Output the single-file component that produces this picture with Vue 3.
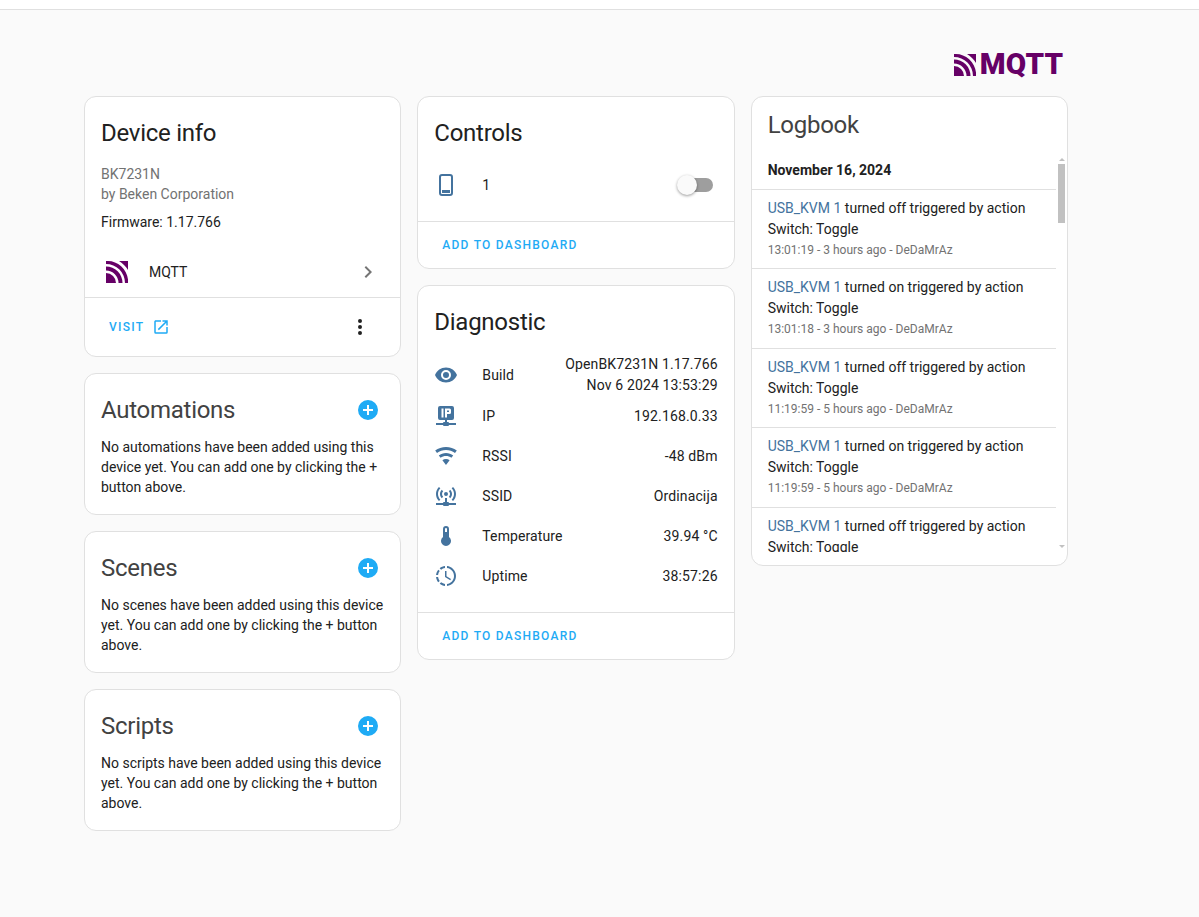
<script setup>
const icons = {
  eye: 'M12,9A3,3 0 0,0 9,12A3,3 0 0,0 12,15A3,3 0 0,0 15,12A3,3 0 0,0 12,9M12,17A5,5 0 0,1 7,12A5,5 0 0,1 12,7A5,5 0 0,1 17,12A5,5 0 0,1 12,17M12,4.5C7,4.5 2.73,7.61 1,12C2.73,16.39 7,19.5 12,19.5C17,19.5 21.27,16.39 23,12C21.27,7.61 17,4.5 12,4.5Z',
  ip: 'M6 2H18A2 2 0 0 1 20 4V14A2 2 0 0 1 18 16H13V18H14A1 1 0 0 1 15 19H22V21H15A1 1 0 0 1 14 22H10A1 1 0 0 1 9 21H2V19H9A1 1 0 0 1 10 18H11V16H6A2 2 0 0 1 4 14V4A2 2 0 0 1 6 2ZM7.5 4.5V13.5H9.5V4.5ZM11 4.5V13.5H13V10H15.5A1.5 1.5 0 0 0 17 8.500V6A1.500 1.500 0 0 0 15.500 4.500ZM13 6.500H15V8H13Z',
  wifi: 'M12,21L15.6,16.2C14.6,15.45 13.35,15 12,15C10.65,15 9.4,15.45 8.4,16.2L12,21M12,3C7.95,3 4.21,4.34 1.2,6.6L3,9C5.5,7.12 8.62,6 12,6C15.38,6 18.5,7.12 21,9L22.8,6.6C19.79,4.34 16.05,3 12,3M12,9C9.3,9 6.81,9.89 4.8,11.4L6.6,13.8C8.1,12.67 9.97,12 12,12C14.03,12 15.9,12.67 17.4,13.8L19.2,11.4C17.19,9.89 14.7,9 12,9Z',
  ap: 'M4.93,2.93C3.12,4.74 2,7.24 2,10C2,12.76 3.12,15.26 4.93,17.07L6.34,15.66C4.89,14.22 4,12.22 4,10C4,7.79 4.89,5.78 6.34,4.34L4.93,2.93M19.07,2.93L17.66,4.34C19.11,5.78 20,7.79 20,10C20,12.22 19.11,14.22 17.66,15.66L19.07,17.07C20.88,15.26 22,12.76 22,10C22,7.24 20.88,4.74 19.07,2.93M7.76,5.76C6.67,6.85 6,8.35 6,10C6,11.65 6.67,13.15 7.76,14.24L9.17,12.83C8.45,12.11 8,11.11 8,10C8,8.89 8.45,7.89 9.17,7.17L7.76,5.76M16.24,5.76L14.83,7.17C15.55,7.89 16,8.89 16,10C16,11.11 15.55,12.11 14.83,12.83L16.24,14.24C17.33,13.15 18,11.65 18,10C18,8.35 17.33,6.85 16.24,5.76M12,8A2,2 0 0,0 10,10A2,2 0 0,0 12,12A2,2 0 0,0 14,10A2,2 0 0,0 12,8M11,14V18H10A1,1 0 0,0 9,19H2V21H9A1,1 0 0,0 10,22H14A1,1 0 0,0 15,21H22V19H15A1,1 0 0,0 14,18H13V14H11Z',
  therm: 'M15 13V5A3 3 0 0 0 9 5V13A5 5 0 1 0 15 13M12 4A1 1 0 0 1 13 5V8H11V5A1 1 0 0 1 12 4Z',
  clock: 'M13,2.03V2.05L13,4.05C17.39,4.59 20.5,8.58 19.96,12.97C19.5,16.61 16.64,19.5 13,19.93V21.93C18.5,21.38 22.5,16.5 21.95,11C21.5,6.25 17.73,2.5 13,2.03M11,2.06C9.05,2.25 7.19,3 5.67,4.26L7.1,5.74C8.22,4.84 9.57,4.26 11,4.06V2.06M4.26,5.67C3,7.19 2.25,9.04 2.05,11H4.05C4.24,9.58 4.8,8.23 5.69,7.1L4.26,5.67M2.06,13C2.26,14.96 3.03,16.81 4.27,18.33L5.69,16.9C4.81,15.77 4.24,14.42 4.06,13H2.06M7.1,18.37L5.67,19.74C7.18,21 9.04,21.79 11,22V20C9.58,19.82 8.23,19.25 7.1,18.37M12.5,7V12.25L17,14.92L16.25,16.15L11,13V7H12.5Z',
  plus: 'M17,13H13V17H11V13H7V11H11V7H13V11H17M12,2A10,10 0 0,0 2,12A10,10 0 0,0 12,22A10,10 0 0,0 22,12A10,10 0 0,0 12,2Z',
  open: 'M14,3V5H17.59L7.76,14.83L9.17,16.24L19,6.41V10H21V3M19,19H5V5H12V3H5C3.89,3 3,3.9 3,5V19A2,2 0 0,0 5,21H19A2,2 0 0,0 21,19V12H19V19Z',
  chevron: 'M8.59,16.58L13.17,12L8.59,7.41L10,6L16,12L10,18L8.59,16.58Z',
  dots: 'M12,16A2,2 0 0,1 14,18A2,2 0 0,1 12,20A2,2 0 0,1 10,18A2,2 0 0,1 12,16M12,10A2,2 0 0,1 14,12A2,2 0 0,1 12,14A2,2 0 0,1 10,12A2,2 0 0,1 12,10M12,4A2,2 0 0,1 14,6A2,2 0 0,1 12,8A2,2 0 0,1 10,6A2,2 0 0,1 12,4Z'
}
const related = [
  { title: 'Automations', text: 'No automations have been added using this device yet. You can add one by clicking the + button above.' },
  { title: 'Scenes', text: 'No scenes have been added using this device yet. You can add one by clicking the + button above.' },
  { title: 'Scripts', text: 'No scripts have been added using this device yet. You can add one by clicking the + button above.' }
]
const diagnostics = [
  { icon: 'ip', label: 'IP', value: '192.168.0.33' },
  { icon: 'wifi', label: 'RSSI', value: '-48 dBm' },
  { icon: 'ap', label: 'SSID', value: 'Ordinacija' },
  { icon: 'therm', label: 'Temperature', value: '39.94 °C' },
  { icon: 'clock', label: 'Uptime', value: '38:57:26' }
]
const log = [
  { state: 'off', time: '13:01:19 - 3 hours ago - DeDaMrAz' },
  { state: 'on', time: '13:01:18 - 3 hours ago - DeDaMrAz' },
  { state: 'off', time: '11:19:59 - 5 hours ago - DeDaMrAz' },
  { state: 'on', time: '11:19:59 - 5 hours ago - DeDaMrAz' },
  { state: 'off', time: '' }
]
const markParts = [
  'M1 13V23H11A10 10 0 0 0 1 13Z',
  'M1 6.500V10.500A12.500 12.500 0 0 1 13.500 23H17.500A16.500 16.500 0 0 0 1 6.500Z',
  'M1 1V4A19 19 0 0 1 20 23H23V19.500C22 9 12.500 1 3 1Z',
  'M14 1H23V10C21 6.500 18 3.500 14 1Z'
]
</script>

<template>
  <div class="page">
    <div class="topbar"></div>
    <div class="wrap">
      <div class="brand">
        <svg class="mark" viewBox="0 0 24 24"><path v-for="p in markParts" :key="p" :d="p" /></svg>
        <span class="brand-text">MQTT</span>
      </div>

      <div class="columns">
        <div class="col">
          <section class="card device">
            <h2 class="title dark">Device info</h2>
            <div class="dev-meta">BK7231N<br />by Beken Corporation</div>
            <div class="dev-fw">Firmware: 1.17.766</div>
            <div class="integration">
              <svg class="mark-sm" viewBox="0 0 24 24"><path v-for="p in markParts" :key="p" :d="p" /></svg>
              <span class="int-name">MQTT</span>
              <svg class="chev" viewBox="0 0 24 24"><path :d="icons.chevron" /></svg>
            </div>
            <div class="actions">
              <span class="btn">VISIT</span>
              <svg class="open" viewBox="0 0 24 24"><path :d="icons.open" /></svg>
              <svg class="dots" viewBox="0 0 24 24"><path :d="icons.dots" /></svg>
            </div>
          </section>

          <section v-for="r in related" :key="r.title" class="card rel">
            <div class="rel-head">
              <h2 class="title">{{ r.title }}</h2>
              <svg class="plus" viewBox="0 0 24 24"><path :d="icons.plus" /></svg>
            </div>
            <p class="rel-text">{{ r.text }}</p>
          </section>
        </div>

        <div class="col">
          <section class="card">
            <h2 class="title dark pad">Controls</h2>
            <div class="ctl-row">
              <svg class="ico" viewBox="0 0 24 24">
                <rect class="phone" x="6" y="2" width="12" height="20" rx="2" />
                <rect x="8" y="17" width="8" height="3" />
              </svg>
              <span class="ctl-name">1</span>
              <span class="switch"><span class="knob"></span></span>
            </div>
            <div class="foot"><span class="btn wide">ADD TO DASHBOARD</span></div>
          </section>

          <section class="card">
            <h2 class="title dark pad">Diagnostic</h2>
            <div class="diag">
              <div class="diag-row first">
                <svg class="ico" viewBox="0 0 24 24"><path :d="icons.eye" /></svg>
                <span class="diag-label">Build</span>
                <span class="diag-value two">OpenBK7231N 1.17.766<br />Nov 6 2024 13:53:29</span>
              </div>
              <div v-for="d in diagnostics" :key="d.label" class="diag-row">
                <svg class="ico" viewBox="0 0 24 24"><path :d="icons[d.icon]" /></svg>
                <span class="diag-label">{{ d.label }}</span>
                <span class="diag-value">{{ d.value }}</span>
              </div>
            </div>
            <div class="foot"><span class="btn wide">ADD TO DASHBOARD</span></div>
          </section>
        </div>

        <div class="col">
          <section class="card logbook">
            <h2 class="log-title">Logbook</h2>
            <div class="log-body">
              <div class="log-list">
                <div class="log-date">November 16, 2024</div>
                <div v-for="(e, i) in log" :key="i" class="entry">
                  <div class="msg"><span class="link">USB_KVM 1</span> turned {{ e.state }} triggered by action</div>
                  <div class="msg">Switch: Toggle</div>
                  <div v-if="e.time" class="when">{{ e.time }}</div>
                </div>
              </div>
              <div class="scroll">
                <span class="arrow up"></span>
                <span class="thumb"></span>
                <span class="arrow down"></span>
              </div>
            </div>
          </section>
        </div>
      </div>
    </div>
  </div>
</template>

<style>
html, body { margin: 0; background: #fafafa; }
</style>

<style scoped>
.page {
  min-height: 917px;
  background: #fafafa;
  font-family: Roboto, "Liberation Sans", sans-serif;
  color: #212121;
  font-size: 14px;
}
.topbar {
  height: 9px;
  background: #fff;
  border-bottom: 1px solid #e0e0e0;
}
.wrap { width: 984px; margin-left: 84px; }
.brand {
  height: 86px;
  box-sizing: border-box;
  padding: 40px 5px 0 0;
  display: flex;
  justify-content: flex-end;
  align-items: flex-start;
  gap: 3px;
}
.mark { width: 24px; height: 24px; margin-top: 3px; fill: #660066; }
.brand-text {
  font-weight: 900;
  font-size: 29.5px;
  line-height: 28px;
  color: #660066;
}
.columns { display: grid; grid-template-columns: repeat(3, 1fr); gap: 16px; align-items: start; }
.col { display: flex; flex-direction: column; gap: 16px; min-width: 0; }
.card {
  background: #fff;
  border: 1px solid #e0e0e0;
  border-radius: 12px;
  box-sizing: border-box;
}
.title {
  margin: 0;
  font-size: 24px;
  line-height: 32px;
  font-weight: 400;
  letter-spacing: -0.27px;
  color: #424242;
}
.title.dark { color: #212121; }
.device .title { padding: 20px 16px 0; }
.title.pad { padding: 20px 16px 0; }
.dev-meta { margin: 15px 16px 0; line-height: 20px; color: #727272; }
.dev-fw { margin: 8px 16px 0; line-height: 20px; }
.integration {
  margin-top: 16px;
  height: 50px;
  box-sizing: border-box;
  border-bottom: 1px solid #e0e0e0;
  display: flex;
  align-items: center;
  padding: 0 20px 1px 20px;
}
.mark-sm { width: 24px; height: 24px; fill: #660066; }
.int-name { margin-left: 20px; flex: 1; }
.chev { width: 24px; height: 24px; fill: #757575; }
.actions {
  height: 58px;
  display: flex;
  align-items: center;
  padding: 0 28px 0 24px;
}
.btn {
  color: #1fabf5;
  font-size: 12px;
  font-weight: 500;
  letter-spacing: 1.25px;
}
.open { width: 18px; height: 18px; fill: #1fabf5; margin-left: 8px; }
.dots { width: 24px; height: 24px; fill: #212121; margin-left: auto; }
.rel { height: 142px; padding: 20px 20px 0 16px; }
.rel-head { display: flex; align-items: center; justify-content: space-between; }
.plus { width: 24px; height: 24px; fill: #1fabf5; }
.rel-text { margin: 11px -4px 0 0; line-height: 20px; }
.ctl-row {
  display: flex;
  align-items: center;
  height: 48px;
  margin-top: 12px;
  padding: 0 21px 0 16px;
  margin-bottom: 12px;
}
.ico { width: 24px; height: 24px; fill: #44739e; flex: none; }
.phone { fill: none; stroke: #44739e; stroke-width: 2; }
.ctl-name { margin-left: 24px; flex: 1; }
.switch {
  position: relative;
  width: 28px;
  height: 14px;
  border-radius: 7px;
  background: #9e9e9e;
}
.knob {
  position: absolute;
  left: -8px;
  top: -3px;
  width: 20px;
  height: 20px;
  border-radius: 50%;
  background: #fafafa;
  box-shadow: 0 1px 3px rgba(0,0,0,.4);
}
.foot {
  height: 46px;
  border-top: 1px solid #e0e0e0;
  display: flex;
  align-items: center;
  padding-left: 24px;
}
.diag { margin-top: 16px; padding: 0 16px; margin-bottom: 16px; }
.diag-row { display: flex; align-items: center; height: 40px; }
.diag-row.first { height: 42px; }
.diag-label { margin-left: 24px; flex: 1; letter-spacing: 0.1px; }
.diag-value { text-align: right; letter-spacing: 0.14px; }
.diag-value.two { line-height: 21px; }
.logbook { height: 470px; overflow: hidden; }
.log-title {
  margin: 0;
  font-size: 24px;
  line-height: 32px;
  font-weight: 400;
  letter-spacing: -0.27px;
  color: #424242;
  padding: 12px 16px 0;
}
.log-body { display: flex; height: 398px; margin-top: 13px; }
.log-list { flex: 1; overflow: hidden; min-width: 0; }
.log-date {
  font-weight: 700;
  line-height: 20px;
  height: 34.6px;
  padding: 6px 16px 0;
  box-sizing: border-box;
}
.entry {
  height: 79.5px;
  box-sizing: border-box;
  border-top: 1px solid #e0e0e0;
  padding: 8px 16px 0;
}
.msg { line-height: 21px; }
.link { color: #44739e; }
.when { font-size: 12px; line-height: 21px; color: #727272; }
.scroll {
  width: 11px;
  flex: none;
  display: flex;
  flex-direction: column;
  align-items: center;
  padding-top: 4px;
  box-sizing: border-box;
}
.thumb { width: 7px; height: 59px; background: #c1c1c1; margin-top: 3px; flex: none; }
.arrow { width: 0; height: 0; border-left: 3px solid transparent; border-right: 3px solid transparent; flex: none; }
.arrow.up { border-bottom: 3px solid #c1c1c1; }
.arrow.down { border-top: 3px solid #c1c1c1; margin-top: auto; margin-bottom: 4px; }
</style>
